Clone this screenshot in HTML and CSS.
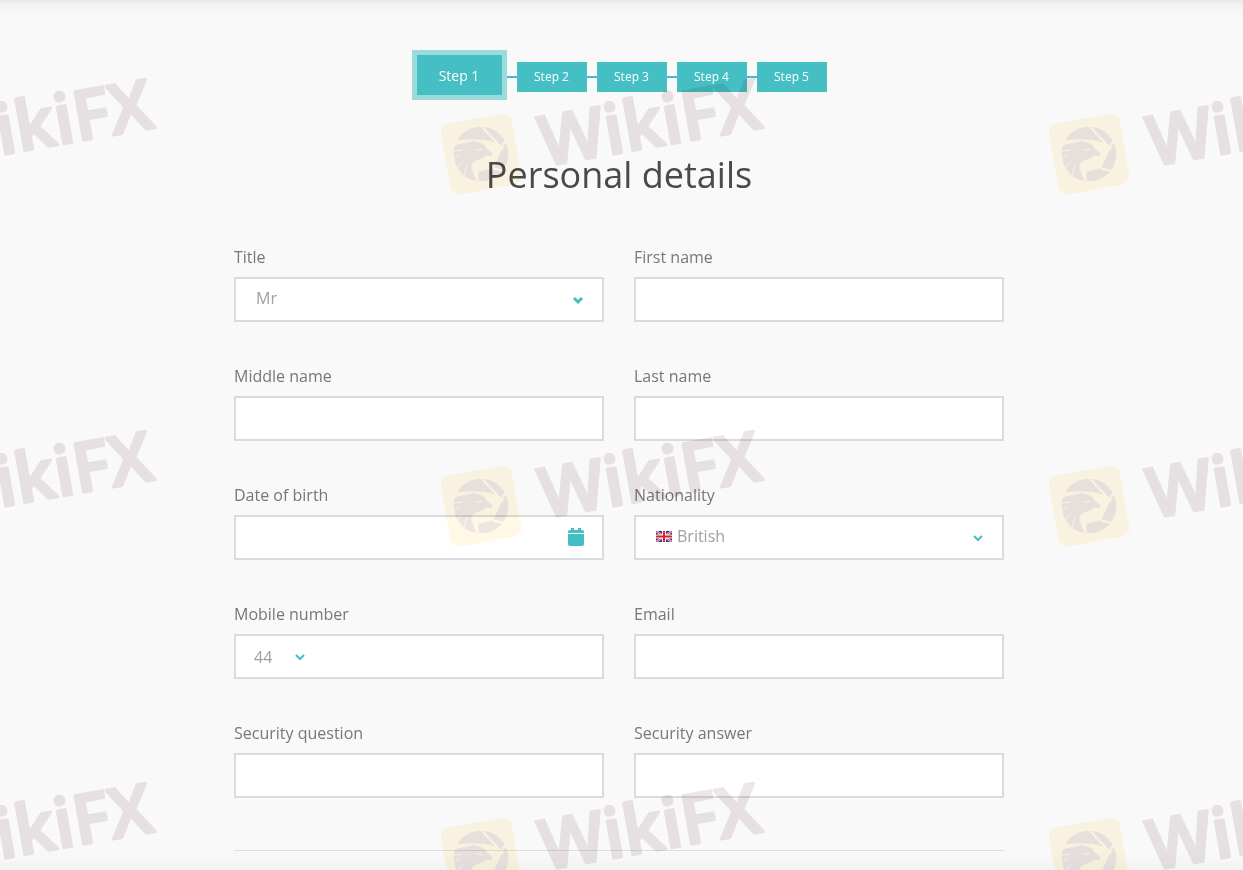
FILE: index.html
```html
<!DOCTYPE html>
<html lang="en">
<head>
    <meta charset="utf-8">
    <title>Personal details</title>
    <link rel="stylesheet" href="styles.css">
</head>
<body>

<main class="page">
    <ol class="steps">
        <li><button type="button" class="step active">Step 1</button></li>
        <li><button type="button" class="step">Step 2</button></li>
        <li><button type="button" class="step">Step 3</button></li>
        <li><button type="button" class="step">Step 4</button></li>
        <li><button type="button" class="step">Step 5</button></li>
    </ol>

    <h1>Personal details</h1>

    <form class="details">
        <div class="field">
            <label for="title">Title</label>
            <div class="control">
                <select id="title">
                    <option>Mr</option>
                    <option>Mrs</option>
                    <option>Miss</option>
                    <option>Ms</option>
                </select>
                <svg class="arrow bold" viewBox="0 0 12 8"><path d="M2 2l4 4 4-4"/></svg>
            </div>
        </div>
        <div class="field">
            <label for="first-name">First name</label>
            <div class="control"><input type="text" id="first-name"></div>
        </div>
        <div class="field">
            <label for="middle-name">Middle name</label>
            <div class="control"><input type="text" id="middle-name"></div>
        </div>
        <div class="field">
            <label for="last-name">Last name</label>
            <div class="control"><input type="text" id="last-name"></div>
        </div>
        <div class="field">
            <label for="birth">Date of birth</label>
            <div class="control">
                <input type="text" id="birth">
                <svg class="calendar" viewBox="0 0 16 18">
                    <path d="M0 5V4q0-2 2-2h1V0h3v2h4V0h3v2h1q2 0 2 2v1zM0 6h16v10q0 2-2 2H2q-2 0-2-2z"/>
                </svg>
            </div>
        </div>
        <div class="field">
            <label for="nationality">Nationality</label>
            <div class="control">
                <svg class="flag" viewBox="0 0 16 11">
                    <path fill="#2b2f7f" d="M0 0h16v11H0z"/>
                    <path stroke="#fff" stroke-width="2" d="M0 0l16 11M16 0L0 11"/>
                    <path stroke="#d8324a" stroke-width="1" d="M0 0l16 11M16 0L0 11"/>
                    <path stroke="#fff" stroke-width="4" d="M8 0v11M0 5.500h16"/>
                    <path stroke="#d8202f" stroke-width="2" d="M8 0v11M0 5.500h16"/>
                </svg>
                <select id="nationality" class="with-flag">
                    <option>British</option>
                    <option>Irish</option>
                    <option>French</option>
                </select>
                <svg class="arrow" viewBox="0 0 12 8"><path d="M2 2l4 4 4-4"/></svg>
            </div>
        </div>
        <div class="field">
            <label for="mobile">Mobile number</label>
            <div class="control phone">
                <div class="code">
                    <select aria-label="Country code">
                        <option>44</option>
                        <option>33</option>
                        <option>49</option>
                    </select>
                    <svg class="arrow" viewBox="0 0 12 8"><path d="M2 2l4 4 4-4"/></svg>
                </div>
                <input type="tel" id="mobile">
            </div>
        </div>
        <div class="field">
            <label for="email">Email</label>
            <div class="control"><input type="email" id="email"></div>
        </div>
        <div class="field">
            <label for="question">Security question</label>
            <div class="control"><input type="text" id="question"></div>
        </div>
        <div class="field">
            <label for="answer">Security answer</label>
            <div class="control"><input type="text" id="answer"></div>
        </div>
    </form>
    <hr>
</main>

<svg class="watermark" aria-hidden="true">
    <defs>
        <g id="logo">
            <rect class="mark-tile" x="-36" y="-36" width="72" height="72" rx="9" transform="rotate(-10)"/>
            <g transform="scale(.3333) translate(-147 -193)">
                <circle class="mark-ink" cx="147" cy="193" r="82"/>
                <path class="mark-cut" d="M154 150l42 10 15 16-27 60-46 10 4 30-9 0-15-44q2-18 22-22 15-2 18-10 12-6 21 1 5-13-13-23-8-16-26-20-20-7-38 3-20-1-38 8l2-17q44-5 88-2z"/>
                <path class="mark-line wide" d="M148 108l66 72M232 134l-26 44M182 236l34 8"/>
                <path class="mark-line" d="M62 188q14-8 28-6M64 210q12-13 25-14M76 238q6-17 18-22M97 262q0-20 9-34M130 178q10 6 20 2"/>
            </g>
        </g>
    </defs>
    <g transform="translate(-127 154)"><use href="#logo"/><text x="60" y="23" transform="rotate(-10)">WikiFX</text></g>
    <g transform="translate(481 154)"><use href="#logo"/><text x="60" y="23" transform="rotate(-10)">WikiFX</text></g>
    <g transform="translate(1089 154)"><use href="#logo"/><text x="60" y="23" transform="rotate(-10)">WikiFX</text></g>
    <g transform="translate(-127 506)"><use href="#logo"/><text x="60" y="23" transform="rotate(-10)">WikiFX</text></g>
    <g transform="translate(481 506)"><use href="#logo"/><text x="60" y="23" transform="rotate(-10)">WikiFX</text></g>
    <g transform="translate(1089 506)"><use href="#logo"/><text x="60" y="23" transform="rotate(-10)">WikiFX</text></g>
    <g transform="translate(-127 858)"><use href="#logo"/><text x="60" y="23" transform="rotate(-10)">WikiFX</text></g>
    <g transform="translate(481 858)"><use href="#logo"/><text x="60" y="23" transform="rotate(-10)">WikiFX</text></g>
    <g transform="translate(1089 858)"><use href="#logo"/><text x="60" y="23" transform="rotate(-10)">WikiFX</text></g>
</svg>

</body>
</html>
```

FILE: styles.css
```css
* {
    box-sizing: border-box;
}
body {
    position: relative;
    margin: 0;
    font-family: "Open Sans", "Noto Sans", sans-serif;
    font-size: 16px;
    color: #777;
    background-color: #f9f9f9;
}
.page {
    padding: 50px 5px 19px 0;
    background: linear-gradient(#e6e6e6, #f2f2f2 4px, #f9f9f9 18px, #f9f9f9 calc(100% - 20px), #f3f3f3);
}
.steps {
    display: flex;
    justify-content: center;
    margin: 0;
    padding: 0;
    list-style: none;
}
.steps li {
    display: flex;
    align-items: center;
}
.steps li + li {
    padding-top: 4px;
}
.steps li + li::before {
    content: "";
    width: 10px;
    height: 2px;
    background: #45bfc4;
}
.step {
    width: 70px;
    height: 30px;
    padding: 0 0 2px;
    border: none;
    font-family: inherit;
    font-size: 12px;
    color: white;
    background: #45bfc4;
}
.step.active {
    width: 95px;
    height: 50px;
    padding: 0;
    border: 5px solid #9cdbdc;
    font-size: 14px;
}
h1 {
    margin: 50px 0 45px;
    font-size: 36px;
    line-height: 50px;
    font-weight: 400;
    text-align: center;
    color: #4a4a4a;
}
.details {
    display: grid;
    grid-template-columns: 1fr 1fr;
    gap: 42px 30px;
    max-width: 770px;
    margin: 0 auto;
}
label {
    display: block;
    margin-bottom: 8px;
    line-height: 24px;
}
.control {
    position: relative;
    height: 45px;
    border: 2px solid #d9dcdf;
    background: white;
}
input, select {
    display: block;
    width: 100%;
    height: 100%;
    padding: 0 20px;
    border: none;
    outline: none;
    font-family: inherit;
    font-size: 16px;
    color: #a0a0a0;
    background: transparent;
}
select {
    appearance: none;
    padding-bottom: 3px;
}
.with-flag {
    padding-left: 41px;
}
.arrow {
    position: absolute;
    top: 17px;
    right: 18px;
    width: 12px;
    height: 8px;
    fill: none;
    stroke: #45bfc4;
    stroke-width: 2;
    pointer-events: none;
}
.arrow.bold {
    stroke-width: 3;
}
.flag {
    position: absolute;
    top: 14px;
    left: 20px;
    width: 16px;
    height: 11px;
}
.calendar {
    position: absolute;
    top: 11px;
    right: 18px;
    width: 16px;
    height: 18px;
    fill: #45bfc4;
}
.phone {
    display: flex;
}
.code {
    position: relative;
    flex: none;
    width: 88px;
}
.code select {
    padding: 0 18px;
}
hr {
    max-width: 770px;
    height: 1px;
    margin: 52px auto 0;
    border: none;
    background: #dedede;
}
.watermark {
    position: absolute;
    top: 0;
    left: 0;
    width: 100%;
    height: 100%;
    overflow: hidden;
    pointer-events: none;
}
.watermark text {
    font-family: "Open Sans", sans-serif;
    font-size: 69px;
    font-weight: 600;
    fill: #ece7e6;
    stroke: #ece7e6;
    stroke-width: 3;
    stroke-linejoin: round;
    mix-blend-mode: multiply;
}
.watermark use {
    mix-blend-mode: multiply;
}
.mark-tile, .mark-cut {
    fill: #fff8e6;
}
.mark-ink {
    fill: #ece6e3;
}
.mark-line {
    fill: none;
    stroke: #fff8e6;
    stroke-width: 3;
}
.mark-line.wide {
    stroke-width: 7;
}
```
